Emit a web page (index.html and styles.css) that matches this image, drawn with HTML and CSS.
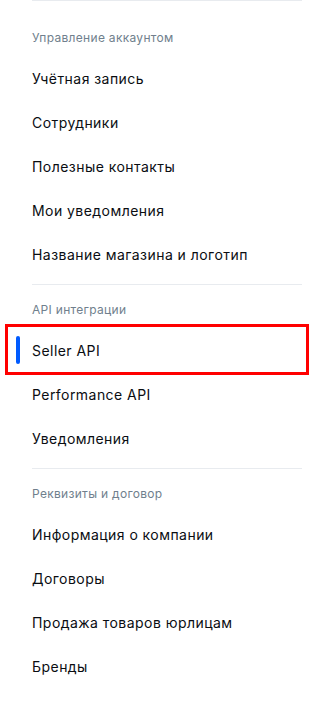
FILE: index.html
```html
<!DOCTYPE html>
<html lang="ru">
<head>
<meta charset="utf-8">
<link rel="stylesheet" href="styles.css">
</head>
<body>
<nav class="menu">
  <section class="group group-first">
    <div class="group-title">Управление аккаунтом</div>
    <ul class="items">
      <li class="item">Учётная запись</li>
      <li class="item">Сотрудники</li>
      <li class="item">Полезные контакты</li>
      <li class="item">Мои уведомления</li>
      <li class="item">Название магазина и логотип</li>
    </ul>
  </section>
  <section class="group">
    <div class="group-title">API интеграции</div>
    <ul class="items">
      <li class="item active">Seller API</li>
      <li class="item">Performance API</li>
      <li class="item">Уведомления</li>
    </ul>
  </section>
  <section class="group">
    <div class="group-title">Реквизиты и договор</div>
    <ul class="items">
      <li class="item">Информация о компании</li>
      <li class="item">Договоры</li>
      <li class="item">Продажа товаров юрлицам</li>
      <li class="item">Бренды</li>
    </ul>
  </section>
</nav>
</body>
</html>
```
FILE: styles.css
```css
* { box-sizing: border-box; }
html, body {
  margin: 0;
  padding: 0;
  background: #ffffff;
}
body {
  font-family: Inter, "Noto Sans", sans-serif;
  color: #0a0d12;
}
.menu {
  padding: 0 18px 0 32px;
}
.group {
  border-top: 1px solid #e8ebef;
  padding: 18px 0 19px;
}
.group-first {
  padding-top: 30px;
}
.group-title {
  font-size: 12px;
  line-height: 14px;
  letter-spacing: 0.3px;
  color: #707f8d;
}
.items {
  list-style: none;
  margin: 24px 0 0;
  padding: 0;
  display: flex;
  flex-direction: column;
  gap: 24px;
}
.item {
  position: relative;
  font-size: 14px;
  line-height: 20px;
  letter-spacing: 0.45px;
}
.item.active::before {
  content: "";
  position: absolute;
  left: -16px;
  top: -5px;
  width: 4px;
  height: 28px;
  border-radius: 2px;
  background: #005bff;
}
.item.active::after {
  content: "";
  position: absolute;
  left: -27px;
  right: -7px;
  top: -17px;
  bottom: -14px;
  border: 3px solid #ff0000;
}
```
